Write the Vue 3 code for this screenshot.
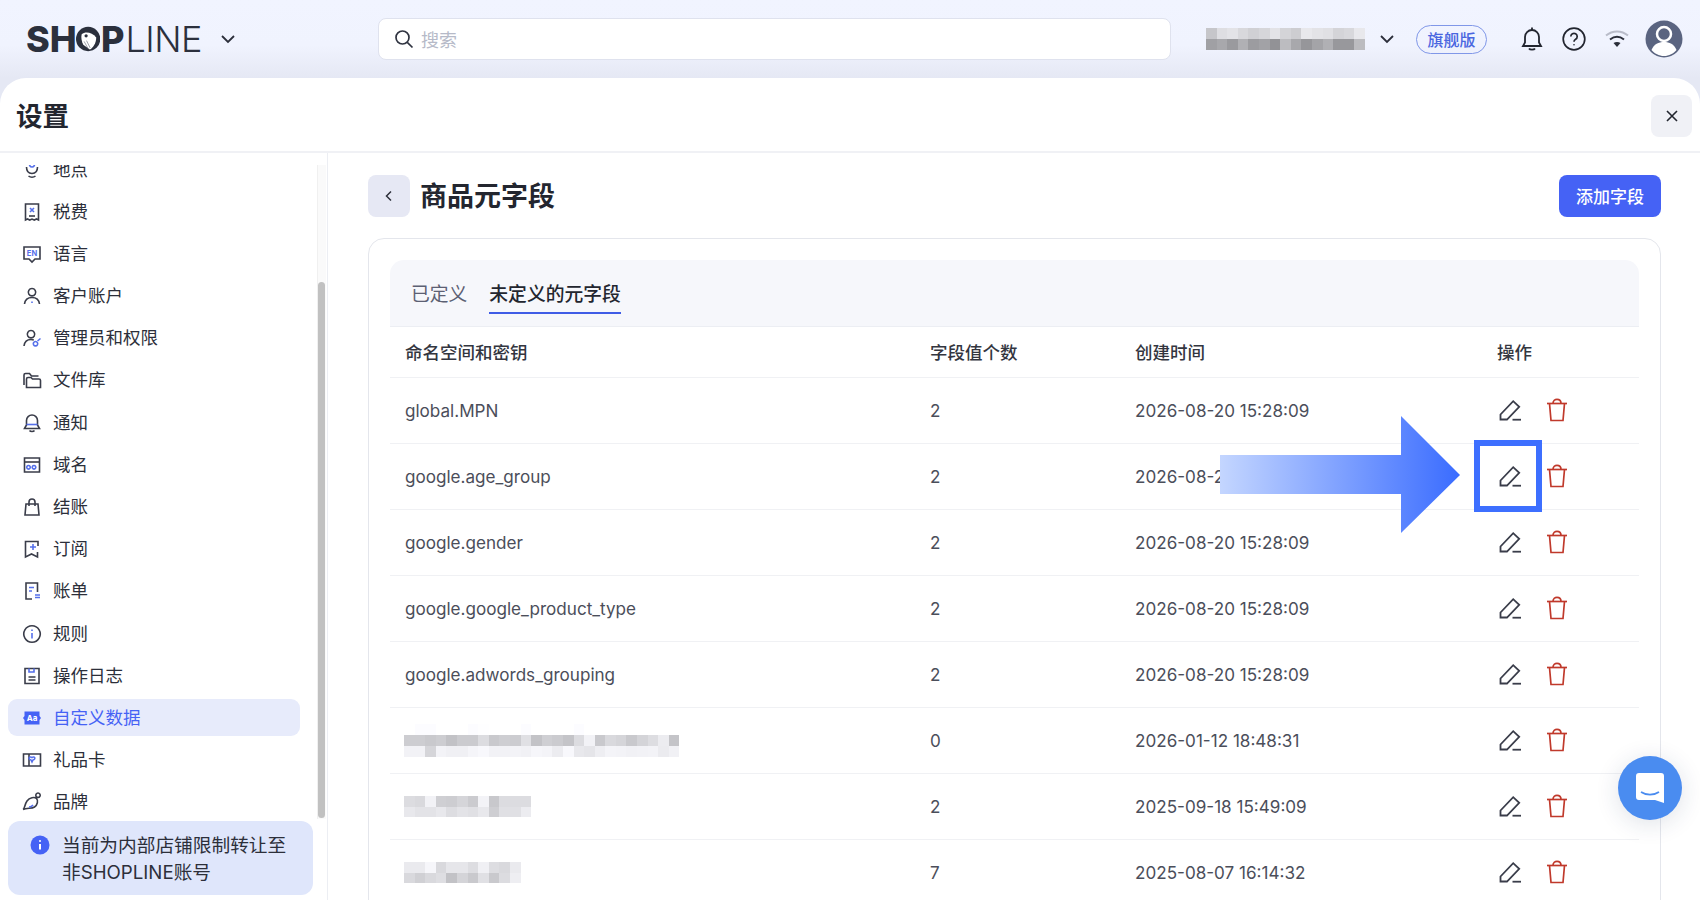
<script setup>
const accountBlur = {
  cols: 15,
  cells: [0xc6, 0xde, 0xe3, 0xd8, 0xd0, 0xd6, 0xe3, 0xd4, 0xcd, 0xe8, 0xe3, 0xe0, 0xd4, 0xd8, 0xe8,
    0xa0, 0xa8, 0x9a, 0xb0, 0x9c, 0xa2, 0x92, 0xbc, 0xa8, 0x96, 0xa4, 0xb0, 0x98, 0x98, 0xbc]
}

const navItems = [
  { name: '地点', dark: ['M4.500 7c0 4 2 6.500 5.500 6.500S15.500 11 15.500 7', 'M6.500 16c1 .8 2.200 1.200 3.500 1.200s2.500-.4 3.500-1.200'], accent: ['M10 2a2.500 2.500 0 1 0 .01 0'] },
  { name: '税费', dark: ['M3.500 2h13v16l-2-1-2.200 1-2.300-1-2.300 1-2.200-1-2 1z', 'M7 14h6'], accent: ['M8 6l4 4M12 6l-4 4'] },
  { name: '语言', dark: ['M2 3h16v12h-5l-3 3-3-3H2z'], label: 'EN' },
  { name: '客户账户', dark: ['M10 2.500a3.700 3.700 0 1 0 .01 0', 'M2.500 18c.5-4 3.500-6.500 7.500-6.500s7 2.500 7.500 6.500'], accent: ['M10 15.500v1.500'] },
  { name: '管理员和权限', dark: ['M9 2.500a3.700 3.700 0 1 0 .01 0', 'M2 18c.5-4 3-6.500 7-6.500 1 0 2 .2 2.800.5'], accent: ['M13.500 13.500a2.200 2.200 0 1 0 .01 0', 'M15.500 13l3-2.500'] },
  { name: '文件库', dark: ['M2 15V5a1.500 1.500 0 0 1 1.500-1.500h4l2 2.500h7', 'M4.500 17.500V9A1.500 1.500 0 0 1 6 7.500h3l1.500 1.500H17A1.500 1.500 0 0 1 18.500 10.500v7z'] },
  { name: '通知', dark: ['M10 2a5.500 5.500 0 0 0-5.500 5.500V12L2.500 15.500h15L15.500 12V7.500A5.500 5.500 0 0 0 10 2z', 'M7.500 17.500c1 1.300 4 1.300 5 0'], accent: ['M4.500 11.500h11'] },
  { name: '域名', dark: ['M2.500 3h15v14h-15z', 'M2.500 7h15'], accent: ['M6.500 10.500a1.800 1.800 0 1 0 .01 0M12 10.500a1.800 1.800 0 1 0 .01 0'] },
  { name: '结账', dark: ['M4 7h12l1 11H3z', 'M7 9V5a3 3 0 0 1 6 0v4'], accent: [] },
  { name: '订阅', dark: ['M16 7V2.500H3.500V18l6-3 6 3v-5'], accent: ['M11 5v6M8 8h6'] },
  { name: '账单', dark: ['M10 18H4V2h11.500v9'], accent: ['M7 6.500h5M7 10h3', 'M13 14h5M13 16.500h5'] },
  { name: '规则', dark: ['M10 1.800a8.200 8.200 0 1 0 .01 0'], accent: ['M10 9v5.500M10 5.500v1.500'] },
  { name: '操作日志', dark: ['M3 2.500h14v15H3z', 'M6.500 11h7M6.500 14h7'], accent: ['M7 2.500v3.500h5V2.500'] },
  { name: '自定义数据', active: true, filled: true, label: 'Aa' },
  { name: '礼品卡', dark: ['M1.500 4h17v12h-17z', 'M7 4v12'], accent: ['M10 7.500c-3-2-4 2-1 2.500l1 2 1-2c3-.5 2-4.500-1-2.500z'] },
  { name: '品牌', dark: ['M1 17.500c2-1 1.500-5 4-8.500s7.500-4.500 9.500-2.500 1 6.500-2 8.500-7.500.5-11.500 2.500z', 'M15.200 6.500L13.500 4.800', 'M16 1a2.200 2.200 0 1 0 .01 0'], accent: ['M7 15c1.500 0 3-.5 4-2'] }
]

const rows = [
  { key: 'global.MPN', count: 2, time: '2026-08-20 15:28:09' },
  { key: 'google.age_group', count: 2, time: '2026-08-20 15:28:09' },
  { key: 'google.gender', count: 2, time: '2026-08-20 15:28:09' },
  { key: 'google.google_product_type', count: 2, time: '2026-08-20 15:28:09' },
  { key: 'google.adwords_grouping', count: 2, time: '2026-08-20 15:28:09' },
  {
    blur: {
      cols: 26,
      cells: [0xff, 0xfc, 0xfc, 0xff, 0xff, 0xff, 0xfc, 0xfe, 0xff, 0xff, 0xff, 0xfc, 0xff, 0xff, 0xff, 0xff, 0xfc, 0xff, 0xff, 0xff, 0xff, 0xff, 0xff, 0xff, 0xff, 0xff,
        0xcd, 0xcd, 0xc9, 0xcd, 0xc2, 0xcb, 0xcb, 0xdc, 0xc9, 0xce, 0xcc, 0xe0, 0xc3, 0xcf, 0xcb, 0xc4, 0xdc, 0xf2, 0xc9, 0xd9, 0xd5, 0xc9, 0xd4, 0xdd, 0xec, 0xc4,
        0xf2, 0xf2, 0xd5, 0xf3, 0xf0, 0xf0, 0xf5, 0xf8, 0xf2, 0xf2, 0xf3, 0xf1, 0xf6, 0xf4, 0xec, 0xf8, 0xe8, 0xe5, 0xee, 0xf4, 0xf3, 0xf1, 0xf2, 0xf3, 0xeb, 0xf1]
    },
    count: 0,
    time: '2026-01-12 18:48:31'
  },
  {
    blur: {
      cols: 12,
      cells: [0xdc, 0xd9, 0xf2, 0xcf, 0xcd, 0xd5, 0xcb, 0xf3, 0xc8, 0xdc, 0xdc, 0xdc,
        0xe8, 0xe3, 0xe3, 0xe8, 0xdd, 0xe3, 0xe0, 0xe8, 0xce, 0xe0, 0xe0, 0xec]
    },
    count: 2,
    time: '2025-09-18 15:49:09'
  },
  {
    blur: {
      cols: 11,
      cells: [0xea, 0xea, 0xf6, 0xd9, 0xe6, 0xe6, 0xdd, 0xf0, 0xdd, 0xd9, 0xea,
        0xd9, 0xd0, 0xd9, 0xde, 0xc2, 0xd4, 0xc9, 0xe0, 0xc9, 0xdc, 0xee]
    },
    count: 7,
    time: '2025-08-07 16:14:32'
  }
]

const gray = (v) => `rgb(${v}, ${v}, ${Math.min(v + 4, 255)})`
</script>

<template>
  <div class="page">
    <header class="topbar">
      <div class="logo-wrap">
        <div class="logo">
          <span class="logo-bold">SH</span>
          <svg class="logo-o" viewBox="0 0 30 30" width="30" height="30">
            <circle cx="15" cy="15" r="15" fill="#2b303d" />
            <path d="M7 9C12 5 20 7 25 13c0 7-4 13-8 15l-8-6C7 18 6 13 7 9z" fill="#fff" />
            <circle cx="12.500" cy="11" r="2" fill="#2b303d" />
            <path d="M10 18l5 9M13 17l4.500 9" stroke="#6b7080" stroke-width=".8" />
          </svg>
          <span class="logo-bold">P</span><span class="logo-thin">LINE</span>
        </div>
        <svg class="chev" viewBox="0 0 16 16" width="16" height="16"><path d="M2 5l6 6 6-6" /></svg>
      </div>

      <div class="search">
        <svg viewBox="0 0 20 20" width="20" height="20" fill="none" stroke="#2f3340" stroke-width="1.700">
          <circle cx="8.500" cy="8.500" r="6.500" />
          <path d="M13.300 13.300L18.500 18.500" />
        </svg>
        <span>搜索</span>
      </div>

      <div class="mosaic account-blur" :style="{ gridTemplateColumns: `repeat(${accountBlur.cols}, 1fr)` }">
        <i v-for="(c, i) in accountBlur.cells" :key="i" :style="{ background: gray(c) }"></i>
      </div>
      <svg class="chev account-chev" viewBox="0 0 16 16" width="16" height="16"><path d="M2 5l6 6 6-6" /></svg>
      <span class="plan">旗舰版</span>

      <svg class="top-icon bell" viewBox="0 0 26 26" width="26" height="26" fill="none" stroke="#22252f" stroke-width="1.800">
        <path d="M13 4a7 7 0 0 0-7 7v5.500L4 20h18l-2-3.500V11a7 7 0 0 0-7-7z" />
        <path d="M13 1.500V4M10 22.500c1 1.600 5 1.600 6 0" />
      </svg>
      <svg class="top-icon help" viewBox="0 0 24 24" width="24" height="24" fill="none" stroke="#22252f" stroke-width="1.700">
        <circle cx="12" cy="12" r="10.800" />
        <path d="M8.800 9.500a3.200 3.200 0 1 1 4.800 2.800c-1 .6-1.600 1.300-1.600 2.400" />
        <circle cx="12" cy="17.800" r=".8" fill="#22252f" stroke="none" />
      </svg>
      <svg class="top-icon wifi" viewBox="0 0 24 20" width="24" height="20" fill="none" stroke-width="2">
        <path d="M1 6.500c6.500-5.500 15.500-5.500 22 0" stroke="#b9bcc9" />
        <path d="M5 10.500c4.500-3.500 9.500-3.500 14 0" stroke="#2b2e3a" />
        <path d="M12 18l-3.500-4c2-1.500 5-1.500 7 0z" fill="#2b2e3a" stroke="none" />
      </svg>
      <svg class="top-icon avatar" viewBox="0 0 38 38" width="38" height="38">
        <circle cx="19" cy="19" r="18.500" fill="#5a6480" />
        <circle cx="19" cy="14" r="7" fill="none" stroke="#fff" stroke-width="2.500" />
        <path d="M6.500 30c2.500-6 7-8 12.500-8s10 2 12.500 8c-3 3.500-7.500 6-12.500 6s-9.500-2.500-12.500-6z" fill="#fff" />
      </svg>
    </header>

    <section class="panel">
      <div class="panel-head">
        <h1>设置</h1>
        <button class="close-btn" type="button">
          <svg viewBox="0 0 14 14" width="14" height="14"><path d="M2 2l10 10M12 2L2 12" /></svg>
        </button>
      </div>

      <div class="panel-body">
        <aside class="sidebar">
          <div class="nav-scroll">
            <nav class="nav">
              <a v-for="item in navItems" :key="item.name" class="nav-item" :class="{ active: item.active }">
                <svg class="nav-icon" viewBox="0 0 20 20" width="20" height="20" fill="none" stroke-width="1.600">
                  <template v-if="item.filled">
                    <path d="M2.500 3.500h15V8l1.500 2-1.500 2v4.500h-15V12L1 10l1.500-2z" fill="#4562f5" />
                    <text x="10" y="13" class="icon-label white">{{ item.label }}</text>
                  </template>
                  <template v-else>
                    <path v-for="d in item.dark" :key="d" :d="d" stroke="#3a3d4a" />
                    <path v-for="d in item.accent" :key="d" :d="d" stroke="#5670ea" />
                    <text v-if="item.label" x="10" y="11.500" class="icon-label">{{ item.label }}</text>
                  </template>
                </svg>
                <span>{{ item.name }}</span>
              </a>
            </nav>
            <div class="scroll-track"><div class="scroll-thumb"></div></div>
          </div>
          <div class="notice">
            <svg viewBox="0 0 20 20" width="20" height="20">
              <circle cx="10" cy="10" r="9.500" fill="#4562f5" />
              <path d="M10 9v5.500M10 5.200v1.600" stroke="#fff" stroke-width="2" />
            </svg>
            <p>当前为内部店铺限制转让至<br />非SHOPLINE账号</p>
          </div>
        </aside>

        <main class="content">
          <div class="content-head">
            <button class="back-btn" type="button">
              <svg viewBox="0 0 12 12" width="12" height="12"><path d="M8 1.500L3.500 6 8 10.500" /></svg>
            </button>
            <h2>商品元字段</h2>
            <button class="add-btn" type="button">添加字段</button>
          </div>

          <div class="card">
            <div class="tabs">
              <span class="tab">已定义</span>
              <span class="tab current">未定义的元字段</span>
            </div>
            <div class="row row-head">
              <span>命名空间和密钥</span>
              <span>字段值个数</span>
              <span>创建时间</span>
              <span>操作</span>
            </div>
            <div v-for="(row, idx) in rows" :key="idx" class="row">
              <span v-if="row.key">{{ row.key }}</span>
              <div v-else class="mosaic" :style="{ gridTemplateColumns: `repeat(${row.blur.cols}, 10.600px)` }">
                <i v-for="(c, i) in row.blur.cells" :key="i" :style="{ background: gray(c) }"></i>
              </div>
              <span>{{ row.count }}</span>
              <span>{{ row.time }}</span>
              <div class="actions">
                <svg viewBox="0 0 22 22" width="22" height="22" fill="none" stroke="#3a3d4a" stroke-width="1.800">
                  <path d="M1.500 20.500v-5L14.200 2.200l6 5.600L8 20.500z" />
                  <path d="M13.500 20.700H22" />
                </svg>
                <svg viewBox="0 0 22 24" width="22" height="24" fill="none" stroke="#c0392b" stroke-width="1.700">
                  <path d="M1 5.500h20" />
                  <path d="M3.500 5.500L5 22.500h12l1.500-17" />
                  <path d="M7 5.500c0-5.500 8-5.500 8 0" />
                </svg>
              </div>
            </div>
          </div>
        </main>
      </div>
    </section>

    <!-- callout drawn on top of the screenshot -->
    <svg class="callout-arrow" viewBox="0 0 240 117" width="240" height="117">
      <defs>
        <linearGradient id="arrowFill" x1="0" y1="0" x2="1" y2="0">
          <stop offset="0" stop-color="#c4d6ff" />
          <stop offset="1" stop-color="#3a6cff" />
        </linearGradient>
      </defs>
      <polygon points="0,39 181,39 181,0 240,59 181,117 181,78 0,78" fill="url(#arrowFill)" />
    </svg>
    <div class="callout-box"></div>

    <button class="chat" type="button">
      <svg viewBox="0 0 30 32" width="30" height="32">
        <path d="M4 1h22a3 3 0 0 1 3 3v27l-9-3H4a3 3 0 0 1-3-3V4a3 3 0 0 1 3-3z" fill="#fff" />
        <path d="M6 20c5 3.500 13 3.500 18 0" fill="none" stroke="#4a8cf0" stroke-width="1.600" />
      </svg>
    </button>
  </div>
</template>

<style>
html,
body {
  margin: 0;
  overflow: hidden;
}
</style>

<style scoped>
.page {
  position: relative;
  width: 1700px;
  height: 900px;
  overflow: hidden;
  display: flex;
  flex-direction: column;
  background: linear-gradient(180deg, #f1f4ff 0, #f0f3fe 45px, #e5e8f4 78px);
  font-family: Inter, "Noto Sans CJK SC", sans-serif;
  color: #2c2f3a;
}

.topbar {
  height: 78px;
  flex: none;
  display: flex;
  align-items: center;
  padding-left: 26px;
}

.logo-wrap {
  width: 352px;
  display: flex;
  align-items: center;
}

.logo {
  width: 176px;
  display: flex;
  align-items: center;
  font-size: 36px;
  line-height: 40px;
  color: #2b303d;
}

.logo-bold {
  font-weight: 800;
}

.logo-thin {
  margin-left: 1px;
  font-weight: 300;
  letter-spacing: -0.500px;
}

.logo-o {
  margin: 0 1px 0 -1px;
}

.chev {
  fill: none;
  stroke: #2b2e3a;
  stroke-width: 1.800;
}

.logo-wrap .chev {
  margin-left: 18px;
}

.search {
  width: 793px;
  height: 42px;
  box-sizing: border-box;
  display: flex;
  align-items: center;
  gap: 7px;
  padding-left: 15px;
  background: #fff;
  border: 1.500px solid #dfe2ee;
  border-radius: 8px;
  font-size: 18px;
  color: #b6bac8;
}

.mosaic {
  display: grid;
  grid-auto-rows: 10.700px;
}

.mosaic i {
  display: block;
}

.account-blur {
  width: 159px;
  margin-left: 35px;
}

.account-chev {
  margin-left: 14px;
}

.plan {
  margin-left: 21px;
  width: 71px;
  height: 29px;
  box-sizing: border-box;
  display: flex;
  align-items: center;
  justify-content: center;
  border: 1.500px solid #8097e8;
  border-radius: 15px;
  font-size: 16px;
  font-weight: 500;
  color: #4a66e0;
}

.top-icon {
  flex: none;
}

.bell {
  margin-left: 32px;
}

.help {
  margin-left: 17px;
}

.wifi {
  margin-left: 19px;
}

.avatar {
  margin-left: 16px;
}

.panel {
  flex: 1;
  min-height: 0;
  display: flex;
  flex-direction: column;
  background: #fff;
  border-radius: 26px 26px 0 0;
}

.panel-head {
  height: 75px;
  flex: none;
  box-sizing: border-box;
  display: flex;
  align-items: center;
  justify-content: space-between;
  padding: 0 8px 0 16px;
  border-bottom: 2px solid #f0f1f5;
}

.panel-head h1 {
  margin: 0;
  font-size: 26.500px;
  font-weight: 600;
  color: #23262f;
}

.close-btn {
  width: 41px;
  height: 42px;
  margin-top: 3px;
  padding: 0;
  display: flex;
  align-items: center;
  justify-content: center;
  background: #f0f1f6;
  border: 0;
  border-radius: 8px;
}

.close-btn path {
  fill: none;
  stroke: #23262f;
  stroke-width: 1.600;
}

.panel-body {
  flex: 1;
  min-height: 0;
  display: flex;
}

.sidebar {
  width: 328px;
  flex: none;
  box-sizing: border-box;
  display: flex;
  flex-direction: column;
  border-right: 1.500px solid #eceef3;
  padding-top: 12px;
}

.nav-scroll {
  height: 654px;
  flex: none;
  display: flex;
  overflow: hidden;
}

.nav {
  width: 317px;
  flex: none;
  margin-top: -14px;
  padding-left: 8px;
  box-sizing: border-box;
}

.nav-item {
  width: 292px;
  height: 37px;
  margin-bottom: 5.200px;
  box-sizing: border-box;
  display: flex;
  align-items: center;
  gap: 11px;
  padding-left: 14px;
  border-radius: 9px;
  font-size: 17.500px;
  color: #2c2f3a;
}

.nav-item span {
  padding-bottom: 3px;
}

.nav-item.active {
  background: #e7ebfb;
  color: #4562f5;
}

.nav-icon {
  flex: none;
}

.icon-label {
  font-size: 7.500px;
  font-weight: 700;
  text-anchor: middle;
  fill: #5670ea;
}

.icon-label.white {
  fill: #fff;
  font-size: 8px;
}

.scroll-track {
  width: 9px;
  background: #fafafa;
  border-left: 1px solid #f0f0f0;
  box-sizing: border-box;
}

.scroll-thumb {
  width: 7px;
  height: 536px;
  margin-top: 117px;
  border-radius: 4px;
  background: #c1c1c1;
}

.notice {
  width: 305px;
  height: 74px;
  margin: 2px 0 0 8px;
  box-sizing: border-box;
  display: flex;
  gap: 12px;
  padding: 11px 0 0 22px;
  background: #dfe6fb;
  border-radius: 12px;
}

.notice svg {
  flex: none;
  margin-top: 3px;
}

.notice p {
  margin: 0;
  font-size: 18.700px;
  line-height: 27px;
  color: #2c2f3a;
  white-space: nowrap;
}

.content {
  flex: 1;
  min-width: 0;
  padding: 22px 39px 0 40px;
  overflow: hidden;
}

.content-head {
  height: 42px;
  display: flex;
  align-items: center;
}

.back-btn {
  width: 42px;
  height: 42px;
  padding: 0;
  display: flex;
  align-items: center;
  justify-content: center;
  background: #e6e8f4;
  border: 0;
  border-radius: 8px;
}

.back-btn path {
  fill: none;
  stroke: #2c2f3a;
  stroke-width: 1.500;
}

.content-head h2 {
  margin: 0 0 4px 10px;
  font-size: 27px;
  font-weight: 600;
  color: #23262f;
}

.add-btn {
  margin-left: auto;
  width: 102px;
  height: 42px;
  padding: 0 0 2px;
  background: #4562f5;
  border: 0;
  border-radius: 8px;
  font-family: inherit;
  font-size: 17px;
  font-weight: 500;
  color: #fff;
}

.card {
  margin-top: 21px;
  height: 700px;
  box-sizing: border-box;
  padding: 21px 21px 0 21px;
  border: 1.500px solid #e4e6ec;
  border-radius: 16px;
}

.tabs {
  height: 67px;
  box-sizing: border-box;
  display: flex;
  align-items: flex-start;
  gap: 22px;
  padding: 19px 0 0 21px;
  background: #f6f7fb;
  border-radius: 14px 14px 0 0;
  border-bottom: 1px solid #eceef3;
}

.tab {
  height: 35px;
  box-sizing: border-box;
  font-size: 18.800px;
  line-height: 32px;
  color: #5c6073;
}

.tab.current {
  color: #23262f;
  font-weight: 500;
  border-bottom: 2.500px solid #3f5ce6;
}

.row {
  height: 66px;
  box-sizing: border-box;
  display: grid;
  grid-template-columns: 525px 205px 362px 157px;
  align-items: center;
  border-bottom: 1.500px solid #f0f1f4;
  font-size: 17.100px;
  color: #4b4e5a;
}

.row > :first-child {
  margin-left: 14px;
}

.row > span:first-child {
  margin-left: 15px;
}

.row > :nth-child(2),
.row > :nth-child(3),
.row > :nth-child(4) {
  margin-left: 15px;
}

.row-head {
  height: 51px;
  font-size: 17.500px;
  font-weight: 500;
  color: #33363f;
}

.row-head span {
  padding-bottom: 2px;
}

.actions {
  display: flex;
  align-items: center;
  gap: 25px;
  padding: 0 0 2px 2px;
}

.callout-arrow {
  position: absolute;
  left: 1220px;
  top: 416px;
}

.callout-box {
  position: absolute;
  left: 1474px;
  top: 440px;
  width: 68px;
  height: 72px;
  box-sizing: border-box;
  border: 6px solid #3d6fff;
}

.chat {
  position: absolute;
  left: 1618px;
  top: 756px;
  width: 64px;
  height: 64px;
  padding: 0;
  display: flex;
  align-items: center;
  justify-content: center;
  background: #4a8cf0;
  border: 0;
  border-radius: 50%;
  box-shadow: 0 4px 24px rgba(30, 50, 90, 0.14);
}
</style>
